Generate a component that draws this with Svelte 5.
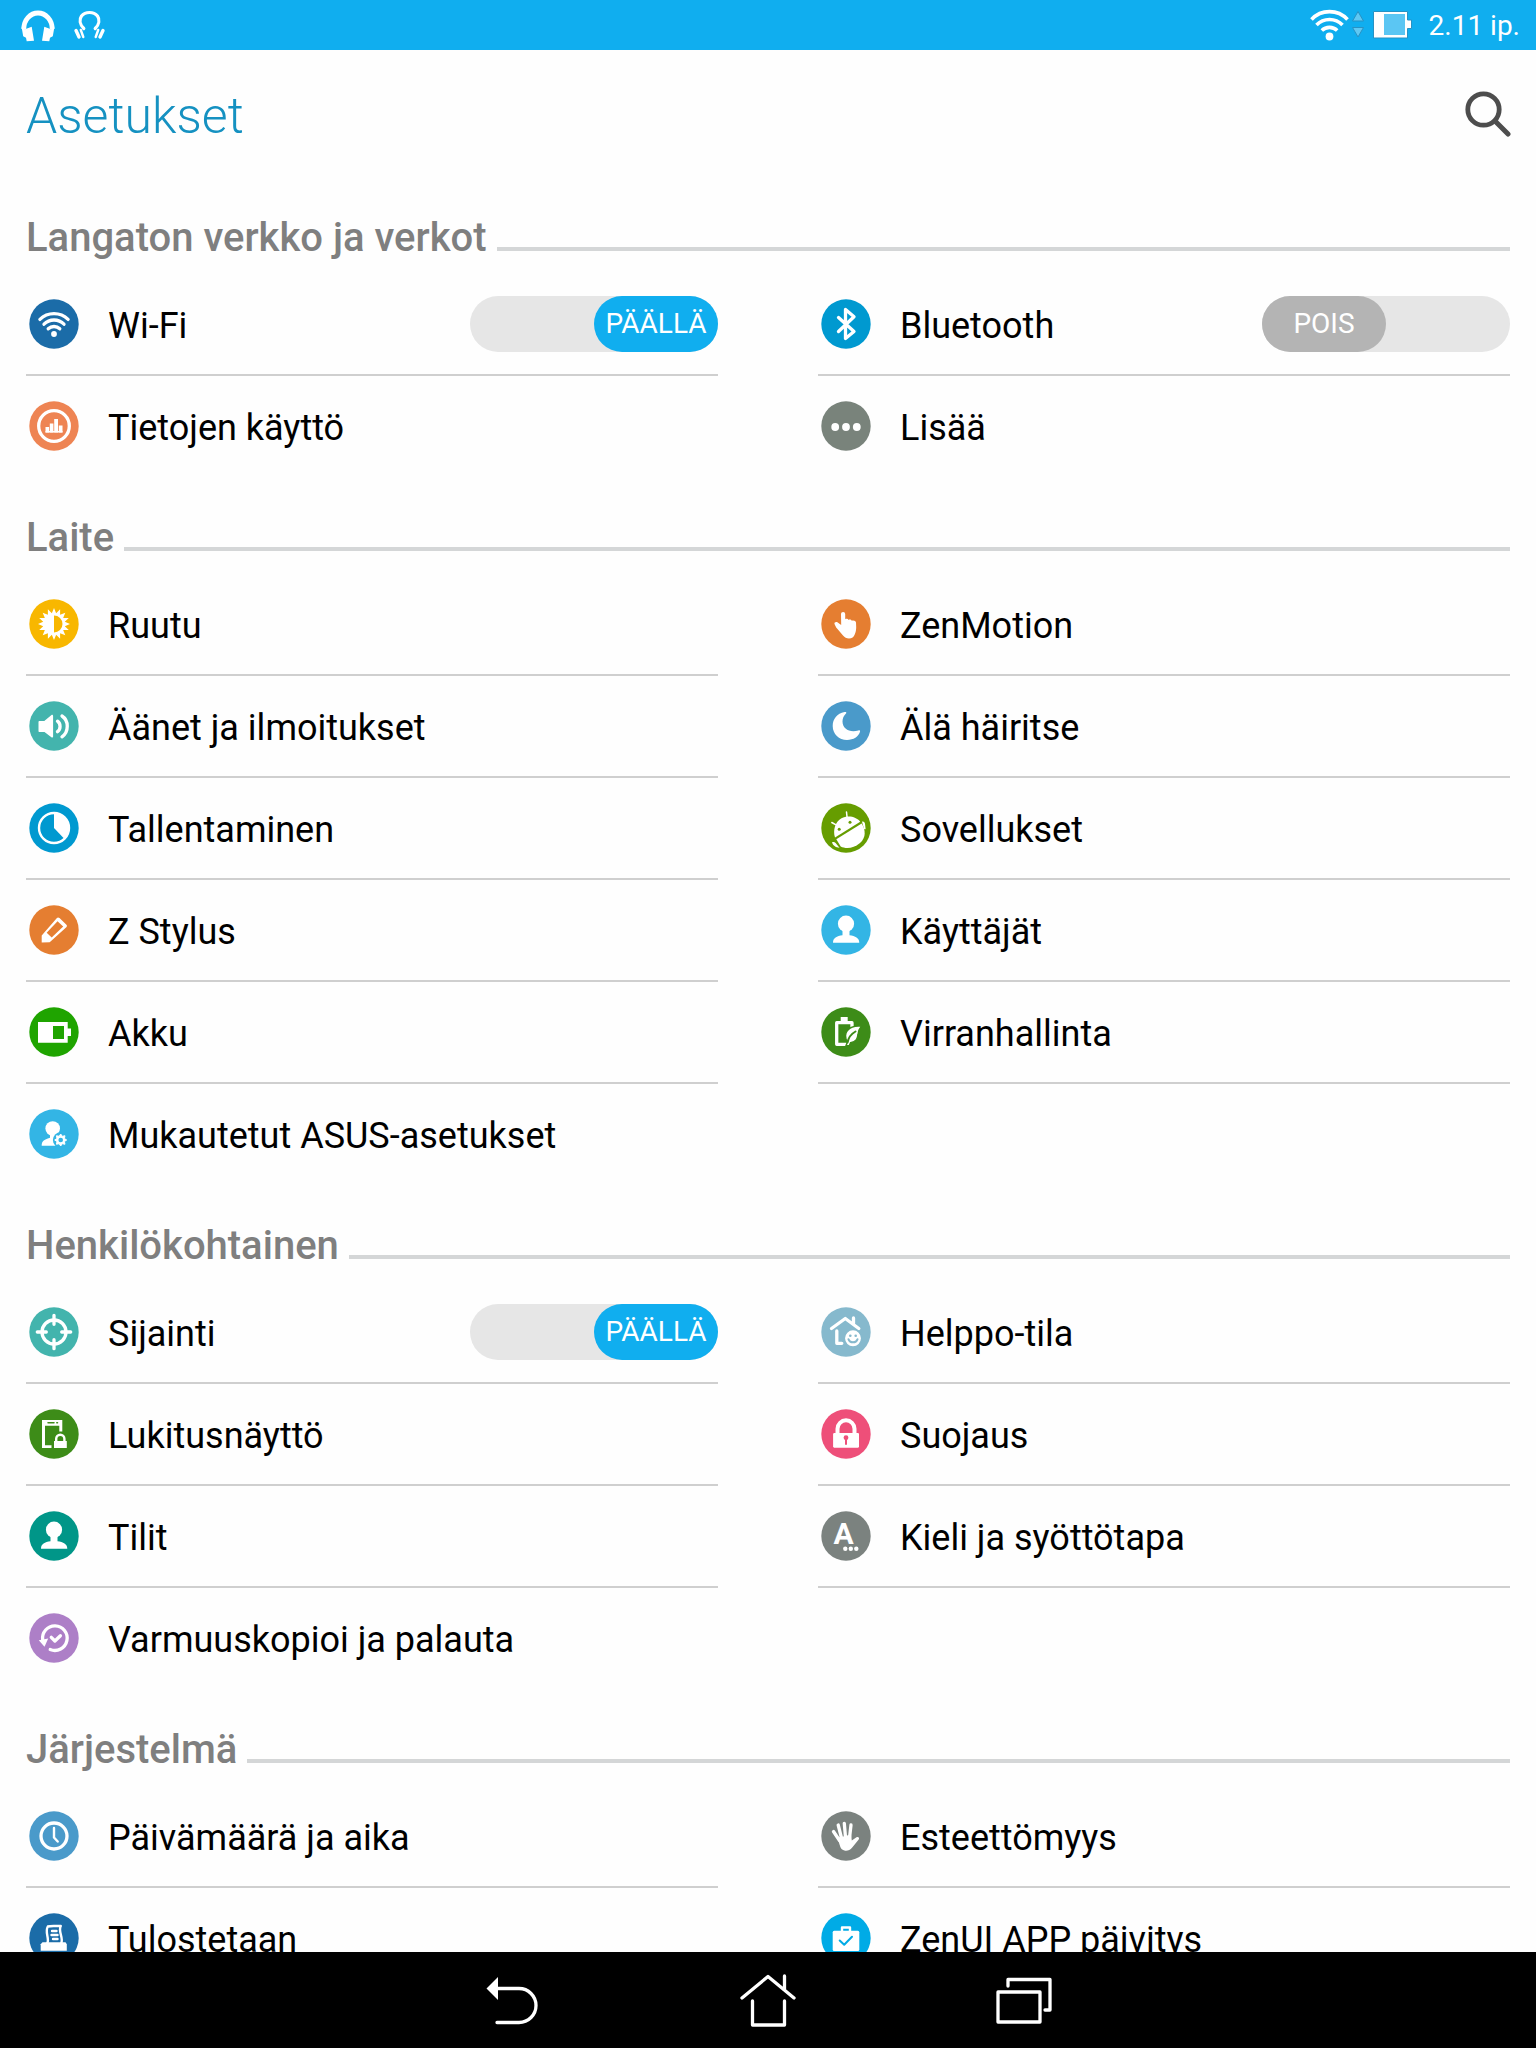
<script lang="ts">
	interface Item {
		icon: string;
		color: string;
		label: string;
		on?: boolean;
	}

	interface Section {
		title: string;
		items: Item[];
	}

	let sections: Section[] = $state([
		{
			title: 'Langaton verkko ja verkot',
			items: [
				{ icon: 'wifi', color: '#1b6ca8', label: 'Wi-Fi', on: true },
				{ icon: 'bluetooth', color: '#0099d0', label: 'Bluetooth', on: false },
				{ icon: 'data', color: '#ee8453', label: 'Tietojen käyttö' },
				{ icon: 'more', color: '#79837b', label: 'Lisää' }
			]
		},
		{
			title: 'Laite',
			items: [
				{ icon: 'brightness', color: '#f8b700', label: 'Ruutu' },
				{ icon: 'pointer', color: '#e57e31', label: 'ZenMotion' },
				{ icon: 'sound', color: '#43b4ad', label: 'Äänet ja ilmoitukset' },
				{ icon: 'moon', color: '#4a9aca', label: 'Älä häiritse' },
				{ icon: 'storage', color: '#0099d0', label: 'Tallentaminen' },
				{ icon: 'android', color: '#669d00', label: 'Sovellukset' },
				{ icon: 'pencil', color: '#e57e31', label: 'Z Stylus' },
				{ icon: 'person', color: '#33b5e5', label: 'Käyttäjät' },
				{ icon: 'battery', color: '#1fa400', label: 'Akku' },
				{ icon: 'power', color: '#3d8c18', label: 'Virranhallinta' },
				{ icon: 'custom', color: '#33b5e5', label: 'Mukautetut ASUS-asetukset' }
			]
		},
		{
			title: 'Henkilökohtainen',
			items: [
				{ icon: 'location', color: '#43b4ad', label: 'Sijainti', on: true },
				{ icon: 'easy', color: '#86b9cd', label: 'Helppo-tila' },
				{ icon: 'lockscreen', color: '#3d8c18', label: 'Lukitusnäyttö' },
				{ icon: 'lock', color: '#ee4f79', label: 'Suojaus' },
				{ icon: 'person', color: '#009688', label: 'Tilit' },
				{ icon: 'language', color: '#7b827f', label: 'Kieli ja syöttötapa' },
				{ icon: 'restore', color: '#ad7fc7', label: 'Varmuuskopioi ja palauta' }
			]
		},
		{
			title: 'Järjestelmä',
			items: [
				{ icon: 'clock', color: '#4a9aca', label: 'Päivämäärä ja aika' },
				{ icon: 'hand', color: '#7b827f', label: 'Esteettömyys' },
				{ icon: 'printer', color: '#1b6ca8', label: 'Tulostetaan' },
				{ icon: 'bag', color: '#00abe6', label: 'ZenUI APP päivitys' }
			]
		}
	]);

	// alternating outer/inner points of the sun and the gear
	function starPoints(cx: number, cy: number, outer: number, inner: number, spikes: number): string {
		return Array.from({ length: spikes * 2 }, (_, i) => {
			const r = i % 2 ? inner : outer;
			const a = (Math.PI * i) / spikes - Math.PI / 2;
			return `${(cx + r * Math.cos(a)).toFixed(2)},${(cy + r * Math.sin(a)).toFixed(2)}`;
		}).join(' ');
	}

	function isLastRow(index: number, count: number): boolean {
		return Math.floor(index / 2) === Math.floor((count - 1) / 2);
	}
</script>

{#snippet glyph(name: string, color: string)}
	<svg class="icon" viewBox="0 0 50 50" {color} aria-hidden="true">
		<circle cx="25" cy="25" r="24.7" fill="currentColor" />
		{#if name === 'wifi'}
			<path class="line" d="M10.9 20.4a20 20 0 0 1 28.2 0M15 25.2a14 14 0 0 1 20 0M19.2 29.8a8.4 8.4 0 0 1 11.6 0" />
			<circle class="solid" cx="25" cy="35" r="2.9" />
		{:else if name === 'bluetooth'}
			<path class="line" d="M17.5 18.5L33 32.5L24.5 39.5V10.5L33 17.8L17.5 32.5" />
		{:else if name === 'data'}
			<circle class="line" cx="25" cy="25" r="15.3" />
			<path class="solid" d="M16.5 31.5V26h3.6v5.5zM20.8 31.5v-9h3.6v9zM25.2 31.5V18H29v13.5zM29.8 31.5v-7h3.7v7z" />
			<path class="solid" d="M16.5 30h17v1.5h-17z" />
		{:else if name === 'more'}
			<g class="solid">
				<circle cx="14.2" cy="26" r="3.9" />
				<circle cx="25" cy="26" r="3.9" />
				<circle cx="35.8" cy="26" r="3.9" />
			</g>
		{:else if name === 'brightness'}
			<polygon class="solid" points={starPoints(25, 25, 16, 11, 16)} />
			<path class="cut" d="M25 16.5a8.5 8.5 0 0 1 0 17z" />
		{:else if name === 'pointer'}
			<path
				class="solid"
				d="M20 15a2 2 0 0 1 4.2 0v5.2c1-.7 2.700-.5 3.300.7 1.200-.6 2.800-.2 3.300.9 1.800-.7 4 0 4.200 1.700l.2 4.500c0 3-.4 5-1.500 7.500-1 2.500-2.700 4-5.700 4-2.500 0-4.300-.9-6-2.900l-6.800-8.100-1.700-3.600c-.4-1.400 1.400-2.300 3.200-1.500l3.500 2.600z"
			/>
		{:else if name === 'sound'}
			<path class="solid" d="M10.500 20h4.800l7.200-6c.7-.5 1.600 0 1.600 1v20.500c0 1-1 1.400-1.700.8L15.500 31h-5c-.6 0-1-.4-1-1v-9c0-.6.4-1 1-1z" />
			<path class="line" d="M28.500 20.200c3.400 2.500 3.400 8 0 10.500M33 15c7 4.500 7 16 0 20.800" />
		{:else if name === 'moon'}
			<path
				class="solid"
				d="M23.500 11C16 12.500 11.700 18 11.700 25c0 8 6.300 14 14.300 14 6.500 0 11.600-3.300 13-8.200.4-1.300-.5-1.800-1.600-1.400C29 32 21.500 28 21.500 20.500c0-3.300 1.300-5.700 3.500-8 .9-1 .1-1.800-1.500-1.500z"
			/>
		{:else if name === 'storage'}
			<circle class="line thin" cx="25" cy="25" r="15" />
			<path class="solid" d="M25 25V9.500A15.500 15.500 0 0 1 35.500 36z" />
		{:else if name === 'android'}
			<path class="solid" d="M14 34.500C11.500 27 14.500 18.500 20.500 15.200c6.500-3.500 15-1.500 18.700 3.500z" />
			<path class="solid" d="M15.300 36.300L40.700 20.400c4 6.600 4.500 14-1.700 19.600-6.500 5.800-14.500 6-19.300 3.500z" />
			<path class="solid" d="M41 18.700c1.500-.8 2.700.4 3 2l.6 5.300c-.6.6-1.200.3-1.700-.6zM11 39.500c1-.8 2.700-.6 3.600.6l3.900 4.600c-3 .1-6.500-2-7.500-5.200z" />
			<path class="line hair" d="M25.500 9l.6 5.500M10.800 19.500l4.700 2.600" />
			<g class="cut">
				<circle cx="29" cy="19.3" r="1.500" />
				<circle cx="18.2" cy="26.3" r="1.500" />
			</g>
		{:else if name === 'pencil'}
			<path class="solid" d="M12.700 37.500V30.500L27.700 13.200c.9-1 1.800-1 2.800-.1l6.700 6.400c1 .9 1 1.900.1 2.800L20.700 37.200z" />
			<path class="cut" d="M17.700 27.800L28.500 16.200l5.700 5.200L22.700 32.600z" />
		{:else if name === 'person'}
			<circle class="solid" cx="25" cy="18.7" r="8.1" />
			<path class="solid" d="M12 37.700c0-5 3.800-6.700 9.500-7.500V25h7v5.200c5.700.8 9.800 2.500 9.800 7.500z" />
		{:else if name === 'battery'}
			<path class="solid" d="M9 15h29.700v6.500H42V29h-3.300v6.700H9z" />
			<path class="cut" d="M24 19h11v13H24z" />
		{:else if name === 'power'}
			<path class="line" d="M31 19.500V15.700H15.700v21.600H26" />
			<path class="solid" d="M19.700 10h7v4h-7z" />
			<path class="solid edge" d="M40.700 18.700c-9 0-15.700 3-16.200 10-.1 2.300.6 4.300 2 6l-1.500 4h3.300l1.300-3c6-.7 7-4.500 7.500-8.500.4-4 1.600-6 3.600-8.500z" />
			<path class="cut-line" d="M34.500 24.500c-4.500 2.500-7 6-8 11" />
		{:else if name === 'custom'}
			<circle class="solid" cx="23.700" cy="19.500" r="7.300" />
			<path class="solid" d="M12.700 36.700c0-4.700 2-6 8.300-8v-4h6v4l5 3v5z" />
			<circle class="cut" cx="31.700" cy="31" r="7.800" />
			<polygon class="solid gear" points={starPoints(31.7, 31, 6, 4, 8)} />
			<circle class="cut" cx="31.700" cy="31" r="2.300" />
		{:else if name === 'location'}
			<circle class="line" cx="25" cy="25" r="12" />
			<path class="line" d="M25 8.300v9M25 32.700v9M8.300 25h9M32.700 25h9" />
		{:else if name === 'easy'}
			<path class="line" d="M10.500 21.500L24.300 11.500l13.500 10M32.500 11v6M15.800 24v12.300h5" />
			<circle class="solid edge" cx="32" cy="31.300" r="8.700" />
			<g class="cut">
				<circle cx="29.300" cy="28.800" r="1.300" />
				<circle cx="34.700" cy="28.800" r="1.300" />
			</g>
			<path class="cut-line" d="M27.500 32.300c1.500 4 7.500 4 9 0" />
		{:else if name === 'lockscreen'}
			<path class="solid" d="M13 11h20.300v11.500h-3V16.800H16v19.500h6.500V39H13z" />
			<path class="cut-line hair" d="M19 13.700h6M27.800 13.700h.7" />
			<path class="line thin" d="M27.200 33v-3.200a4.100 4.100 0 0 1 8.200 0V33" />
			<path class="solid" d="M25 32h12.800v7H25z" />
		{:else if name === 'lock'}
			<path class="line thick" d="M16.500 26v-6.200a8.500 8.500 0 0 1 17 0V26" />
			<path class="solid" d="M13 24h24.200l.8.800v13l-.8.900H13l-.9-.9v-13z" />
			<circle class="cut" cx="25" cy="28.700" r="2.400" />
			<path class="cut-line" d="M25 29v6" />
		{:else if name === 'language'}
			<text class="letter" x="22.500" y="33" text-anchor="middle">A</text>
			<g class="solid">
				<circle cx="24.300" cy="37.700" r="2.200" />
				<circle cx="29.800" cy="37.700" r="2.200" />
				<circle cx="35.300" cy="37.700" r="2.200" />
			</g>
		{:else if name === 'restore'}
			<path class="line" d="M13.700 27a12.300 12.300 0 1 1 7.500 9.500" />
			<path class="solid" d="M9.800 27.200l9.400-1.700-3.700 8.300z" />
			<path class="line" d="M22.300 24.300l3.600 3.700 5.500-5.300" />
		{:else if name === 'clock'}
			<circle class="line" cx="25" cy="25" r="13" />
			<path class="line thin" d="M25 17v9.500l3.700 4" />
		{:else if name === 'hand'}
			<path class="line" d="M12.500 20.500l6 9M17.200 14l3.300 13M23.300 12.300l1.200 14M30 14l-1.500 13" />
			<path class="solid" d="M16.500 27l13.500-3.500.8 6 4.700-3.200c1.800-.8 3.300.7 2.200 2.300l-6.500 7.900c-2 2.500-4.500 3.500-7 3.200-3.200-.4-4.700-2.500-5.500-5.700z" />
		{:else if name === 'printer'}
			<path class="line thin" d="M18.300 30c2.500-4-2.800-11 .5-16.500 3.500-1 8.500-.2 13-.5-3 5.300 2.800 11.700.5 17" />
			<path class="line thin" d="M23 18h4.500M22.500 22h6M24 26h4.500" />
			<path class="solid" d="M13.500 29.300h23l1.300 2v6.400H11.700v-6.400z" />
		{:else if name === 'bag'}
			<path class="line thin" d="M21 18v-3.500h8V18" />
			<rect class="solid" x="11.700" y="17.700" width="26.600" height="20.300" rx="1.500" />
			<path class="cut-line" d="M18.700 27.500l4.500 4.300 7.800-8" />
		{/if}
	</svg>
{/snippet}

<div class="screen">
	<div class="status-bar">
		<div class="status-group notices">
			<svg width="34" height="34" viewBox="0 0 34 34" aria-hidden="true">
				<path d="M2.800 21A14.200 16 0 0 1 31.200 21" fill="none" stroke="#fff" stroke-width="4.800" />
				<path
					d="M.5 18.500L4 21.200l6.700-2.500 2.300 14-7.300.5-.7-3.500-2.800-1.500zM33.500 18.500L30 21.200l-6.700-2.500-2.300 14 7.300.5.7-3.500 2.800-1.500z"
					fill="#fff"
				/>
			</svg>
			<svg width="34" height="34" viewBox="0 0 34 34" fill="none" stroke="#fff" stroke-linecap="round" aria-hidden="true">
				<path d="M10.800 20.500C6.800 16.500 6 11.500 8.500 8c3.800-4.700 12.200-4.700 16 0 2.500 3.500 1.700 8.500-2.300 12.500" stroke-width="3.200" />
				<path d="M10.300 29L7.800 22M22.700 29l2.500-7" stroke-width="2.400" />
				<path d="M3 22.500l3 6.500M30 22.500L27 29" stroke-width="3.400" />
			</svg>
		</div>
		<div class="status-group">
			<svg width="56" height="34" viewBox="0 0 56 34" fill="none" stroke="#fff" stroke-width="3.600" aria-hidden="true">
				<path d="M2.500 11.500a24.500 24.500 0 0 1 36 0M7.500 17a18 18 0 0 1 26 0M12.800 22.500a11 11 0 0 1 15.400 0" />
				<circle cx="20.500" cy="28.500" r="3.900" fill="#fff" stroke="none" />
				<path
					d="M49 3.500L54.500 13h-11zM49 29l5.500-9.500h-11z"
					fill="#5fc8f3"
					stroke="#2792c4"
					stroke-width="1"
					stroke-linejoin="round"
				/>
			</svg>
			<svg class="battery" width="40" height="28" viewBox="0 0 40 28" aria-hidden="true">
				<path d="M.5.5h34v8.500h4v8.500h-4V27H.5z" fill="#fff" stroke="#2792c4" />
				<path d="M11 3h21v21H11z" fill="#5bc6f3" />
			</svg>
			<span class="time">2.11 ip.</span>
		</div>
	</div>

	<header>
		<h1>Asetukset</h1>
		<button class="search" aria-label="Haku">
			<svg width="46" height="46" viewBox="0 0 46 46" fill="none" stroke="#4d4d4d" stroke-linecap="round" aria-hidden="true">
				<circle cx="18.500" cy="18.500" r="15.700" stroke-width="4.800" />
				<path d="M30.500 30.500L43 43" stroke-width="5" />
			</svg>
		</button>
	</header>

	<main>
		{#each sections as section (section.title)}
			<section>
				<h2>{section.title}</h2>
				<div class="grid">
					{#each section.items as item, i (item.label)}
						{#if item.on !== undefined}
							<label class="row" class:last={isLastRow(i, section.items.length)}>
								{@render glyph(item.icon, item.color)}
								<span class="name">{item.label}</span>
								<input type="checkbox" role="switch" bind:checked={item.on} />
								<span class="track" class:on={item.on}>
									<span class="thumb">{item.on ? 'PÄÄLLÄ' : 'POIS'}</span>
								</span>
							</label>
						{:else}
							<button class="row" class:last={isLastRow(i, section.items.length)}>
								{@render glyph(item.icon, item.color)}
								<span class="name">{item.label}</span>
							</button>
						{/if}
					{/each}
				</div>
			</section>
		{/each}
	</main>

	<nav>
		<button aria-label="Takaisin">
			<svg width="56" height="56" viewBox="0 0 56 56" aria-hidden="true">
				<path d="M12 16.500h23a17 17 0 0 1 0 34H13" />
				<path class="head" d="M2.500 16.500L14 5v23z" />
			</svg>
		</button>
		<button aria-label="Koti">
			<svg width="56" height="56" viewBox="0 0 56 56" aria-hidden="true">
				<path d="M2 26L28 4.500 54 26M44.500 4v14M12.500 29v24h32V29" />
			</svg>
		</button>
		<button aria-label="Viimeisimmät">
			<svg width="56" height="56" viewBox="0 0 56 56" aria-hidden="true">
				<path d="M2 20h42v30H2zM12 14V7.500h42V38h-5" />
			</svg>
		</button>
	</nav>
</div>

<style>
	:global(body) {
		margin: 0;
		background: #fefefe;
	}

	.screen {
		display: flex;
		flex-direction: column;
		height: 100vh;
		overflow: hidden;
		font-family: Roboto, 'Noto Sans', sans-serif;
		color: #000;
	}

	button {
		font: inherit;
		color: inherit;
		background: none;
		border: 0;
		padding: 0;
		cursor: pointer;
	}

	svg {
		display: block;
		flex-shrink: 0;
	}

	.status-bar {
		display: flex;
		align-items: center;
		justify-content: space-between;
		flex-shrink: 0;
		height: 50px;
		padding: 0 16px 0 21px;
		background: #10aeef;
		color: #fff;
	}

	.status-group {
		display: flex;
		align-items: center;
	}

	.notices {
		gap: 18px;
	}

	.battery {
		margin: 0 16px 0 8px;
	}

	.time {
		padding-top: 2px;
		font-size: 28px;
		line-height: 32px;
	}

	header {
		display: flex;
		align-items: center;
		justify-content: space-between;
		flex-shrink: 0;
		height: 128px;
		padding: 0 25px 0 26px;
	}

	h1 {
		margin: 0;
		padding-top: 4px;
		font-size: 50px;
		font-weight: 300;
		line-height: 60px;
		color: #1591c1;
	}

	main {
		flex: 1;
		min-height: 0;
		overflow-y: auto;
		scrollbar-width: none;
		padding: 0 26px;
	}

	h2 {
		display: flex;
		align-items: baseline;
		gap: 10px;
		margin: 0;
		padding: 36px 0 12px;
		font-size: 40px;
		font-weight: 500;
		line-height: 48px;
		color: #7f7f7f;
	}

	h2::after {
		content: '';
		flex: 1;
		height: 4px;
		margin-bottom: -1px;
		background: #d4d6d7;
	}

	.grid {
		display: grid;
		grid-template-columns: 1fr 1fr;
		column-gap: 100px;
	}

	.row {
		position: relative;
		display: flex;
		align-items: center;
		height: 100px;
		box-sizing: content-box;
		border-bottom: 2px solid #cfcfcf;
		font-size: 36px;
		line-height: 44px;
		text-align: left;
		cursor: pointer;
	}

	.row.last {
		border-bottom-color: transparent;
	}

	.icon {
		width: 50px;
		height: 50px;
		margin: 0 29px 0 3px;
	}

	.name {
		flex: 1;
		padding-top: 4px;
	}

	.solid {
		fill: #fff;
	}

	.edge {
		stroke: currentColor;
		stroke-width: 1.5px;
	}

	.gear {
		stroke: #fff;
		stroke-width: 1px;
	}

	.cut {
		fill: currentColor;
	}

	.line,
	.cut-line {
		fill: none;
		stroke: #fff;
		stroke-width: 3.3px;
		stroke-linecap: round;
		stroke-linejoin: round;
	}

	.cut-line {
		stroke: currentColor;
		stroke-width: 2px;
	}

	.thin {
		stroke-width: 2.4px;
	}

	.thick {
		stroke-width: 4px;
	}

	.hair {
		stroke-width: 1.5px;
	}

	.letter {
		fill: #fff;
		font-size: 30px;
		font-weight: 700;
	}

	input {
		position: absolute;
		right: 0;
		width: 248px;
		height: 56px;
		margin: 0;
		opacity: 0;
		cursor: pointer;
	}

	.track {
		display: flex;
		width: 248px;
		border-radius: 28px;
		background: #e6e6e6;
	}

	.track.on {
		justify-content: flex-end;
	}

	.thumb {
		width: 50%;
		border-radius: 28px;
		background: #b4b4b4;
		color: #fff;
		font-size: 28px;
		line-height: 56px;
		text-align: center;
	}

	.on .thumb {
		background: #10aeef;
	}

	nav {
		display: flex;
		flex-shrink: 0;
		height: 96px;
		padding: 0 25%;
		background: #000;
	}

	nav button {
		display: flex;
		flex: 1;
		align-items: center;
		justify-content: center;
	}

	nav svg {
		fill: none;
		stroke: #fff;
		stroke-width: 3.3px;
		stroke-linecap: round;
		stroke-linejoin: round;
	}

	.head {
		fill: #fff;
		stroke: none;
	}
</style>
